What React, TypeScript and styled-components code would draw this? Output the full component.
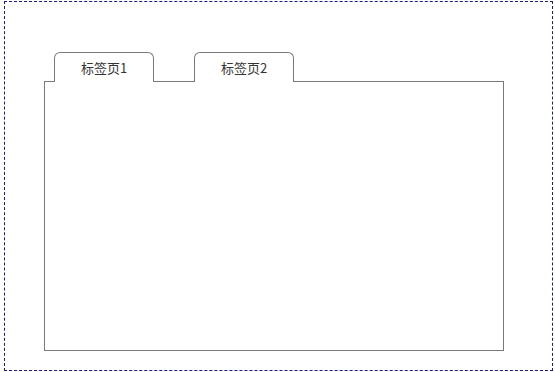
import React from 'react'
import styled, { createGlobalStyle } from 'styled-components'

const GlobalStyle = createGlobalStyle`
  html, body {
    margin: 0;
    padding: 0;
    background: #ffffff;
  }
  body {
    font-family: "Noto Sans CJK SC", "Liberation Sans", sans-serif;
  }
`

const Frame = styled.div`
  box-sizing: border-box;
  width: 549px;
  height: 370px;
  margin: 1px 0 0 4px;
  border: 1px dashed #1a1a8c;
  padding: 50px 0 0 39px;
`

const TabBar = styled.div`
  display: flex;
  gap: 40px;
  padding-left: 10px;
  position: relative;
  z-index: 1;
`

const Tab = styled.div<{ $active?: boolean }>`
  box-sizing: border-box;
  width: 100px;
  height: 30px;
  border: 1px solid #7a7a7a;
  border-bottom: none;
  border-radius: 6px 6px 0 0;
  background: #ffffff;
  margin-bottom: -1px;
  display: flex;
  align-items: center;
  justify-content: center;
  font-size: 13px;
  color: #333333;
  padding-bottom: 1px;
`

const Panel = styled.div`
  box-sizing: border-box;
  width: 460px;
  height: 270px;
  border: 1px solid #7a7a7a;
  background: #ffffff;
`

export default function App() {
  const tabs = ['标签页1', '标签页2']

  return (
    <>
      <GlobalStyle />
      <Frame>
        <TabBar>
          {tabs.map((t) => (
            <Tab key={t}>{t}</Tab>
          ))}
        </TabBar>
        <Panel />
      </Frame>
    </>
  )
}
